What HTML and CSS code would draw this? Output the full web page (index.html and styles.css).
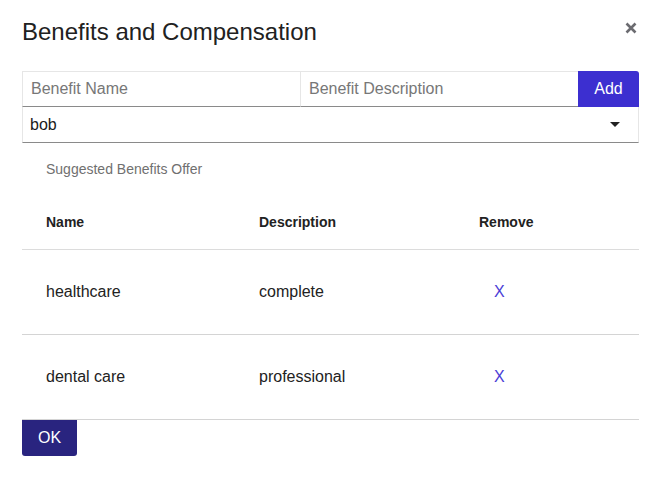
FILE: index.html
```html
<!DOCTYPE html>
<html lang="en">
<head>
<meta charset="utf-8">
<title>Benefits and Compensation</title>
<link rel="stylesheet" href="styles.css">
</head>
<body>
<div class="dialog">
  <div class="header">
    <h1 class="title">Benefits and Compensation</h1>
    <button class="close" aria-label="Close">
      <svg width="12" height="12" viewBox="0 0 12 12"><path d="M1.5 1.5 L10.5 10.5 M10.5 1.5 L1.5 10.5" stroke="#6b6b70" stroke-width="2.6" stroke-linecap="butt"/></svg>
    </button>
  </div>
  <div class="form-row">
    <input class="field field-name" type="text" placeholder="Benefit Name">
    <input class="field field-desc" type="text" placeholder="Benefit Description">
    <button class="add">Add</button>
  </div>
  <div class="select">
    <span class="select-value">bob</span>
    <span class="caret"></span>
  </div>
  <p class="subtitle">Suggested Benefits Offer</p>
  <table class="table">
    <thead>
      <tr><th class="c1">Name</th><th class="c2">Description</th><th class="c3">Remove</th></tr>
    </thead>
    <tbody>
      <tr><td>healthcare</td><td>complete</td><td><span class="remove">X</span></td></tr>
      <tr><td>dental care</td><td>professional</td><td><span class="remove">X</span></td></tr>
    </tbody>
  </table>
  <button class="ok">OK</button>
</div>
</body>
</html>
```
FILE: styles.css
```css
* { box-sizing: border-box; }
body {
  margin: 0;
  background: #fff;
  font-family: "Liberation Sans", Arial, sans-serif;
  color: #222;
}
.dialog {
  padding: 17px 20px 0 22px;
}
.header {
  display: flex;
  justify-content: space-between;
  align-items: flex-start;
}
.title {
  margin: 0;
  font-size: 24px;
  font-weight: 400;
  line-height: 29px;
  color: #212121;
}
.close {
  border: none;
  background: none;
  padding: 0;
  margin: 5px 2px 0 0;
  width: 12px;
  height: 12px;
  display: flex;
  cursor: pointer;
}
.form-row {
  display: flex;
  margin-top: 25px;
  height: 36px;
}
.field {
  height: 36px;
  border: 1px solid #e6e6e6;
  border-bottom: 1px solid #8a8a8a;
  padding: 0 8px;
  font-family: inherit;
  font-size: 16px;
  color: #222;
  outline: none;
  margin: 0;
  min-width: 0;
}
.field::placeholder { color: #777; }
.field-name { width: 278px; border-right: none; }
.field-desc { width: 278px; border-right: none; }
.add {
  width: 61px;
  height: 36px;
  border: none;
  background: #3c2fd0;
  color: #fff;
  font-family: inherit;
  font-size: 16px;
  border-radius: 0 3px 0 0;
  padding: 0;
  margin: 0;
}
.select {
  height: 36px;
  display: flex;
  align-items: center;
  justify-content: space-between;
  border: 1px solid #e6e6e6;
  border-top: none;
  border-bottom: 1px solid #8a8a8a;
  padding: 0 18px 0 7px;
  font-size: 16px;
  color: #1a1a1a;
}
.caret {
  width: 0;
  height: 0;
  border-left: 5px solid transparent;
  border-right: 5px solid transparent;
  border-top: 5px solid #222;
}
.subtitle {
  margin: 16px 0 0 24px;
  font-size: 14px;
  line-height: 20px;
  color: #707070;
}
.table {
  width: 100%;
  border-collapse: collapse;
  margin-top: 16px;
  font-size: 16px;
}
.table th {
  text-align: left;
  font-size: 14px;
  font-weight: 700;
  color: #222;
  height: 54px;
  padding: 0 0 0 24px;
  border-bottom: 1px solid #dcdcdc;
  vertical-align: middle;
}
.table .c1 { width: 213px; }
.table .c2 { width: 220px; }
.table td {
  height: 85px;
  padding: 0 0 0 24px;
  border-bottom: 1px solid #d4d4d4;
  vertical-align: middle;
  color: #222;
}
.remove {
  margin-left: 15px;
  color: #4a3dd6;
}
.ok {
  display: block;
  width: 55px;
  height: 36px;
  border: none;
  border-radius: 0 0 3px 3px;
  background: #29247f;
  color: #fff;
  font-family: inherit;
  font-size: 16px;
  padding: 0;
  margin: 0;
}
```
